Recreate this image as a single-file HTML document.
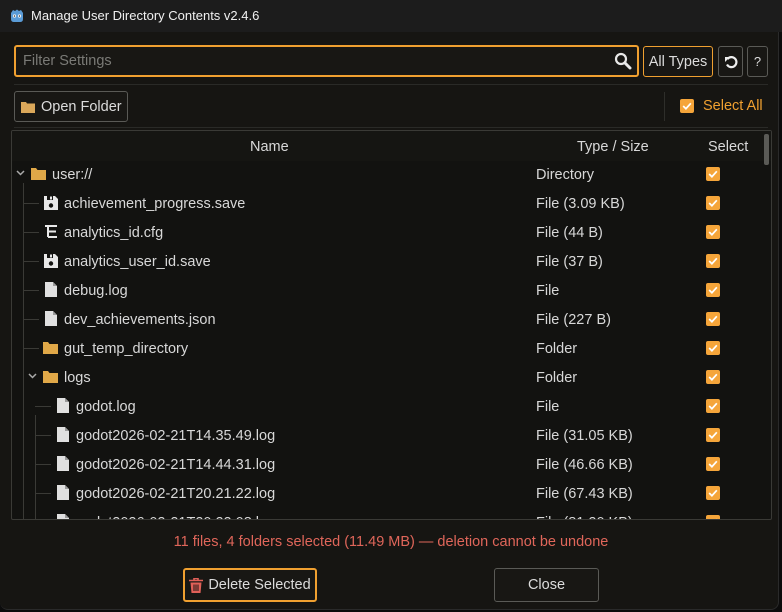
<!DOCTYPE html>
<html><head><meta charset="utf-8"><style>
*{box-sizing:border-box;margin:0;padding:0}
body{width:782px;height:612px;background:#0c0c0c;font-family:"Liberation Sans","DejaVu Sans",sans-serif;color:#d8d8d8;font-size:14.5px;position:relative;overflow:hidden}
.abs{position:absolute}
#title{left:0;top:0;width:782px;height:32px;background:#1c1c1c}
#win{left:0;top:32px;width:779px;height:578px;background:#161512;border-radius:0 0 8px 8px;border-right:1px solid #2a2a2a;border-bottom:1px solid #2a2a2a}
.btn{position:absolute;border:1px solid #5a5a56;border-radius:3px;background:#181714;display:flex;align-items:center;justify-content:center;color:#dcdcdc;font-size:14.5px}
.org{border-color:#f0a030}
.cb{position:absolute;width:14px;height:14px;background:#f5a53a;border-radius:2px}
.cb svg{position:absolute;left:1px;top:1px}
.hl{position:absolute;background:#3a3a36}
</style></head><body>
<div id="title" class="abs"></div>
<svg class="abs" style="left:9px;top:8px" width="16" height="16" viewBox="0 0 16 16"><path d="M2 5 L4 2 L6 3 L8 1.5 L10 3 L12 2 L14 5 L14 11 Q14 14 11 14 L5 14 Q2 14 2 11Z" fill="#5a9bd6"/><circle cx="5.5" cy="8" r="1.6" fill="#fff"/><circle cx="10.5" cy="8" r="1.6" fill="#fff"/><circle cx="5.5" cy="8" r=".8" fill="#333"/><circle cx="10.5" cy="8" r=".8" fill="#333"/></svg>
<div class="abs" style="left:31px;top:8px;font-size:13px;color:#f0f0f0">Manage User Directory Contents v2.4.6</div>
<div id="win" class="abs"></div>

<div class="btn org" style="left:14px;top:45px;width:625px;height:32px;border-width:2px;justify-content:flex-start;padding-left:7px;color:#7a7a76">Filter Settings</div>
<svg class="abs" style="left:614px;top:52px" width="18" height="18" viewBox="0 0 18 18"><circle cx="7" cy="7" r="5" fill="none" stroke="#e8e8e8" stroke-width="2.2"/><path d="M11 11 L16 16" stroke="#e8e8e8" stroke-width="3" stroke-linecap="round"/></svg>
<div class="btn org" style="left:643px;top:46px;width:70px;height:31px">All Types</div>
<div class="btn" style="left:718px;top:46px;width:25px;height:31px"><svg width="14" height="14" viewBox="0 0 14 14"><path d="M3.5 4 A5 5 0 1 1 3 9.5" fill="none" stroke="#eee" stroke-width="2.2"/><path d="M1 2 L6 2 L1 7Z" fill="#eee"/></svg></div>
<div class="btn" style="left:747px;top:46px;width:21px;height:31px;font-size:13px">?</div>
<div class="hl" style="left:14px;top:84px;width:754px;height:1px;background:#2a2a27"></div>

<div class="btn" style="left:14px;top:91px;width:114px;height:31px;justify-content:flex-start;padding-left:6px"><svg width="14" height="12" viewBox="0 0 14 12" style="margin-right:6px"><path d="M0 1 L5 1 L6 2.5 L14 2.5 L14 12 L0 12Z" fill="#dba85a"/></svg>Open Folder</div>
<div class="hl" style="left:664px;top:92px;width:1px;height:29px;background:#2e2e2a"></div>
<div class="cb" style="left:680px;top:99px"><svg width="12" height="12" viewBox="0 0 11 11"><path d="M2 5.5 L4.5 8 L9 3" fill="none" stroke="#fff" stroke-width="1.6"/></svg></div>
<div class="abs" style="left:703px;top:98px;color:#f0a030">Select All</div>
<div class="hl" style="left:14px;top:127px;width:754px;height:1px;background:#2a2a27"></div>

<div class="abs" style="left:11px;top:130px;width:761px;height:390px;border:1px solid #3a3a36;border-radius:2px;background:#121210;overflow:hidden">
 <div class="abs" style="left:0;top:0;width:100%;height:30px;background:#151512"></div>
 <div class="abs" style="left:238px;top:8px">Name</div>
 <div class="abs" style="left:565px;top:8px">Type / Size</div>
 <div class="abs" style="left:696px;top:8px">Select</div>
 <div class="abs" style="left:752px;top:3px;width:5px;height:31px;background:#5a5a56;border-radius:2px"></div>
 <div class="abs" style="left:0;top:29px;width:750px;height:359px;overflow:hidden">
  <div class="hl" style="left:11px;top:23px;width:1px;height:340px"></div>
  <div class="hl" style="left:23px;top:255px;width:1px;height:110px"></div>
  <div id="rows"></div>
 </div>
</div>
<script>
var R=[["u","user://","Directory",0],["s","achievement_progress.save","File (3.09 KB)",1],["c","analytics_id.cfg","File (44 B)",1],["s","analytics_user_id.save","File (37 B)",1],["f","debug.log","File",1],["f","dev_achievements.json","File (227 B)",1],["d","gut_temp_directory","Folder",1],["l","logs","Folder",1],["f","godot.log","File",2],["f","godot2026-02-21T14.35.49.log","File (31.05 KB)",2],["f","godot2026-02-21T14.44.31.log","File (46.66 KB)",2],["f","godot2026-02-21T20.21.22.log","File (67.43 KB)",2],["f","godot2026-02-21T20.22.08.log","File (81.20 KB)",2]];
var ic={
f:'<svg width="12" height="15" viewBox="0 0 12 15"><path d="M0 0 L8 0 L12 4 L12 15 L0 15Z" fill="#e0e0e0"/><path d="M8 0 L8 4 L12 4" fill="#9a9a9a"/></svg>',
d:'<svg width="15" height="12" viewBox="0 0 15 12"><path d="M0 0 L5 0 L6.5 2 L15 2 L15 12 L0 12Z" fill="#e0a848"/></svg>',
s:'<svg width="14" height="14" viewBox="0 0 14 14"><path d="M0 0 L11 0 L14 3 L14 14 L0 14Z" fill="#e8e8e8"/><rect x="3" y="0" width="6" height="4" fill="#121210"/><rect x="6" y="0.5" width="2" height="3" fill="#e8e8e8"/><circle cx="7" cy="9.5" r="2.2" fill="#121210"/></svg>',
c:'<svg width="14" height="13" viewBox="0 0 14 13"><path d="M1 1 H13 M4 6.5 H12 M4 12 H13 M4 1 V12" stroke="#e8e8e8" stroke-width="2" fill="none"/></svg>'};
ic.u=ic.d;ic.l=ic.d;
var h='';
R.forEach(function(r,i){var y=i*29,lv=r[3],ix=lv==0?19:(lv==1?31:43);
 var tag=r[0];
 if(lv==1&&tag!='l')h+='<div class="hl" style="left:11px;top:'+(y+14)+'px;width:16px;height:1px"></div>';
 if(lv==2)h+='<div class="hl" style="left:23px;top:'+(y+14)+'px;width:16px;height:1px"></div>';
 if(tag=='u'||tag=='l')h+='<svg class="abs" style="left:'+(tag=='u'?4:16)+'px;top:'+(y+10)+'px" width="9" height="6" viewBox="0 0 9 6"><path d="M1 1 L4.5 4.5 L8 1" fill="none" stroke="#aaa" stroke-width="1.5"/></svg>';
 var off=(tag=='f')?2:((tag=='d'||tag=='u'||tag=='l')?0:1);
 h+='<div class="abs" style="left:'+(ix+off)+'px;top:'+(y+6+(tag=='f'?0:(tag=='s'||tag=='c'?1:2)))+'px">'+ic[tag]+'</div>';
 h+='<div class="abs" style="left:'+(ix+21)+'px;top:'+(y+7)+'px;white-space:nowrap">'+r[1]+'</div>';
 h+='<div class="abs" style="left:524px;top:'+(y+7)+'px;white-space:nowrap">'+r[2]+'</div>';
 h+='<div class="cb" style="left:694px;top:'+(y+7)+'px"><svg width="12" height="12" viewBox="0 0 11 11"><path d="M2 5.5 L4.5 8 L9 3" fill="none" stroke="#fff" stroke-width="1.6"/></svg></div>';
});
document.getElementById('rows').innerHTML=h;
</script>
<div class="abs" style="left:0;width:782px;top:534px;text-align:center;color:#e0665a">11 files, 4 folders selected (11.49 MB) — deletion cannot be undone</div>
<div class="btn org" style="left:183px;top:568px;width:134px;height:34px;border-width:2px"><svg width="14" height="15" viewBox="0 0 14 15" style="margin-right:5px"><path d="M0 2.5 H14 M5 2.5 V0.5 H9 V2.5" stroke="#e06058" stroke-width="1.6" fill="none"/><path d="M1.5 4.5 H12.5 L11.5 15 H2.5Z" fill="#e06058"/><path d="M5 6.5 V13 M7 6.5 V13 M9 6.5 V13" stroke="#161512" stroke-width="1"/></svg>Delete Selected</div>
<div class="btn" style="left:494px;top:568px;width:105px;height:34px">Close</div>
</body></html>
